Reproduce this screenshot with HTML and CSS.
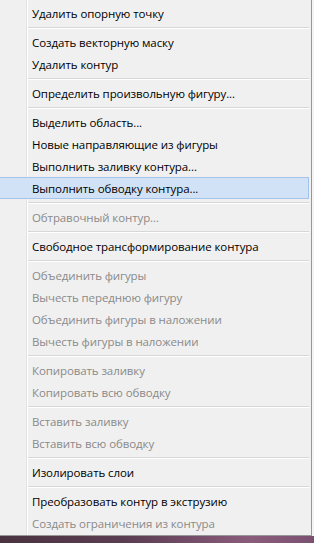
FILE: index.html
```html
<!DOCTYPE html>
<html lang="ru">
<head>
<meta charset="utf-8">
<title>Меню контура</title>
<link rel="stylesheet" href="styles.css">
</head>
<body>
<div class="page">
  <ul class="menu">
    <li class="item">Удалить опорную точку</li>
    <li class="sep"></li>
    <li class="item">Создать векторную маску</li>
    <li class="item">Удалить контур</li>
    <li class="sep"></li>
    <li class="item">Определить произвольную фигуру...</li>
    <li class="sep"></li>
    <li class="item">Выделить область...</li>
    <li class="item">Новые направляющие из фигуры</li>
    <li class="item">Выполнить заливку контура...</li>
    <li class="item active">Выполнить обводку контура...</li>
    <li class="sep"></li>
    <li class="item disabled">Обтравочный контур...</li>
    <li class="sep"></li>
    <li class="item">Свободное трансформирование контура</li>
    <li class="sep"></li>
    <li class="item disabled">Объединить фигуры</li>
    <li class="item disabled">Вычесть переднюю фигуру</li>
    <li class="item disabled">Объединить фигуры в наложении</li>
    <li class="item disabled">Вычесть фигуры в наложении</li>
    <li class="sep"></li>
    <li class="item disabled">Копировать заливку</li>
    <li class="item disabled">Копировать всю обводку</li>
    <li class="sep"></li>
    <li class="item disabled">Вставить заливку</li>
    <li class="item disabled">Вставить всю обводку</li>
    <li class="sep"></li>
    <li class="item">Изолировать слои</li>
    <li class="sep"></li>
    <li class="item">Преобразовать контур в экструзию</li>
    <li class="item disabled">Создать ограничения из контура</li>
  </ul>
  <div class="desktop"></div>
</div>
</body>
</html>
```

FILE: styles.css
```css
html, body {
  margin: 0;
  padding: 0;
}
body {
  width: 314px;
  height: 543px;
  overflow: hidden;
  background: #f4f4f4;
  font-family: "Open Sans", "Noto Sans", sans-serif;
  font-size: 11.5px;
  letter-spacing: -0.1px;
  color: #000;
}
.page {
  display: flex;
  flex-direction: column;
  height: 543px;
}
.menu {
  list-style: none;
  margin: 0;
  padding: 2px 0 1px 0;
  width: 311px;
  border-right: 1px solid #979797;
  border-bottom: 1px solid #979797;
  background: linear-gradient(to right, #f0f0f0 0 26px, #e2e3e3 26px 27px, #ffffff 27px 28px, #f0f0f0 28px);
}
.item {
  height: 22px;
  line-height: 21px;
  padding-left: 32px;
  margin-right: 2px;
  white-space: nowrap;
  box-sizing: border-box;
  border: 1px solid transparent;
  border-left: 0;
}
.item.active {
  background: #d1e2f6;
  border-color: #a3c3ea;
}
.item.disabled {
  color: #8a8a8a;
}
.sep {
  height: 7px;
  margin: 0 2px 0 28px;
  background: linear-gradient(to bottom, transparent 0 3px, #d7d7d7 3px 4px, #ffffff 4px 5px, transparent 5px);
}
.desktop {
  flex: 1;
  background: linear-gradient(to right, #4a3340 0, #5b3d52 40%, #8a5c7c 80%, #7a5070 100%);
}
```
